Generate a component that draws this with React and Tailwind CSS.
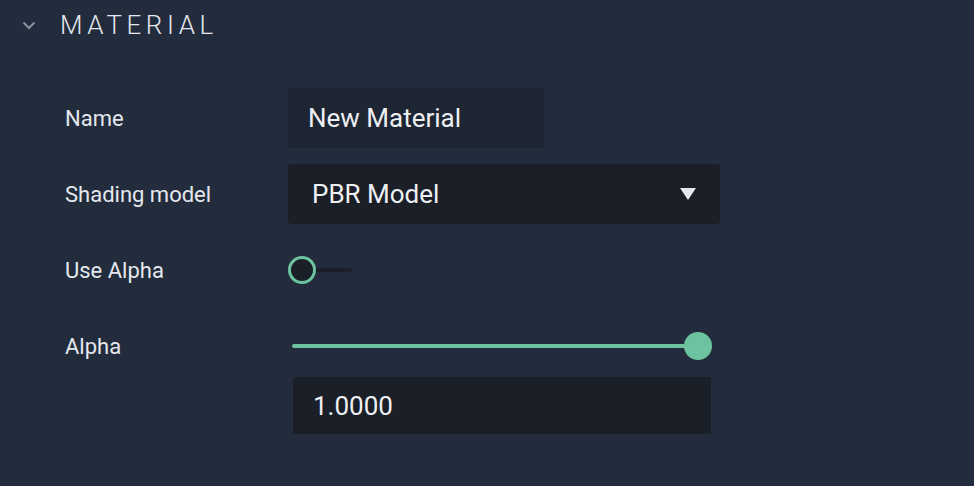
import { useState } from "react";

const Row = ({ label, children }) => (
  <div className="flex items-start">
    <div className="flex h-[60px] w-[223px] shrink-0 items-center text-[22px] text-[#e4e8ee]">
      {label}
    </div>
    <div className="flex flex-col">{children}</div>
  </div>
);

export default function App() {
  const [name, setName] = useState("New Material");
  const [useAlpha, setUseAlpha] = useState(false);
  const [alpha, setAlpha] = useState(1);

  return (
    <div
      className="h-[486px] w-[974px] overflow-hidden bg-[#222c3c]"
      style={{ fontFamily: "Roboto, 'Noto Sans', sans-serif" }}
    >
      <div className="flex h-[50px] items-center pl-[22px]">
        <svg width="14" height="9" viewBox="0 0 14 9" className="mr-[24px] mt-[1px]">
          <path d="M1.5 1.5 L7 7 L12.5 1.5" fill="none" stroke="#8a919c" strokeWidth="2" />
        </svg>
        <span className="text-[26px] font-light uppercase tracking-[0.175em] text-[#e3e7ee]">
          Material
        </span>
      </div>

      <div className="mt-[38px] flex flex-col gap-4 pl-[65px]">
        <Row label="Name">
          <input
            value={name}
            onChange={(e) => setName(e.target.value)}
            className="h-[60px] w-[256px] bg-[#1e2533] px-[20px] text-[26px] text-[#eef0f4] outline-none"
          />
        </Row>

        <Row label="Shading model">
          <button className="flex h-[60px] w-[432px] items-center justify-between rounded-[4px] bg-[#1a1f28] pl-[24px] pr-[24px] text-[26px] text-[#eef0f4]">
            <span>PBR Model</span>
            <svg width="16" height="12" viewBox="0 0 16 12">
              <path d="M0 0 H16 L8 12 Z" fill="#e8e6ee" />
            </svg>
          </button>
        </Row>

        <Row label="Use Alpha">
          <button
            onClick={() => setUseAlpha(!useAlpha)}
            className="relative flex h-[60px] w-[64px] items-center"
          >
            <span className="absolute left-[14px] right-0 top-[28px] h-1 rounded-full bg-[#1a1f28]" />
            <span className="relative h-[28px] w-[28px] rounded-full border-[3.5px] border-[#6dc3a0] bg-[#1a1f28]" />
          </button>
        </Row>

        <Row label="Alpha">
          <div className="relative ml-[4px] flex h-[60px] w-[420px] items-center">
            <div className="h-1 w-full rounded-full bg-[#6dc3a0]" style={{ width: `${alpha * 406}px` }} />
            <span className="absolute right-0 top-[16px] h-[28px] w-[28px] rounded-full bg-[#6dc3a0]" />
          </div>
          <input
            value={alpha.toFixed(4)}
            onChange={(e) => setAlpha(Math.min(1, Math.max(0, Number(e.target.value) || 0)))}
            className="ml-[5px] mt-[1px] h-[57px] w-[418px] bg-[#1a1f28] px-[20px] text-[26px] text-[#eef0f4] outline-none"
          />
        </Row>
      </div>
    </div>
  );
}
